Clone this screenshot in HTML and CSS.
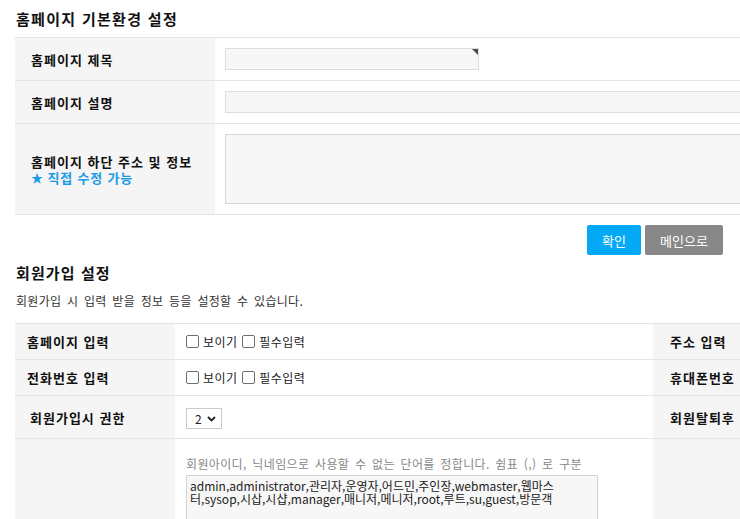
FILE: index.html
```html
<!DOCTYPE html>
<html lang="ko">
<head>
<meta charset="utf-8">
<title>홈페이지 기본환경 설정</title>
<link rel="stylesheet" href="styles.css">
</head>
<body>
<div class="page">
  <h2 class="sec-title">홈페이지 기본환경 설정</h2>
  <div class="form-table basic">
    <div class="row">
      <div class="th">홈페이지 제목</div>
      <div class="td">
        <span class="input-wrap"><input type="text" class="inp inp-short"><span class="corner"></span></span>
      </div>
    </div>
    <div class="row">
      <div class="th">홈페이지 설명</div>
      <div class="td"><input type="text" class="inp inp-long"></div>
    </div>
    <div class="row">
      <div class="th th-2line">
        <span class="line">홈페이지 하단 주소 및 정보</span>
        <span class="line note"><span class="star">★</span> 직접 수정 가능</span>
      </div>
      <div class="td"><textarea class="ta-addr"></textarea></div>
    </div>
  </div>
  <div class="btn-row">
    <button type="button" class="btn btn-ok">확인</button>
    <button type="button" class="btn btn-main">메인으로</button>
  </div>

  <h2 class="sec-title sec-title2">회원가입 설정</h2>
  <p class="sec-desc">회원가입 시 입력 받을 정보 등을 설정할 수 있습니다.</p>
  <div class="form-table member">
    <div class="row row-s">
      <div class="th th-l">홈페이지 입력</div>
      <div class="td2">
        <label class="chk"><input type="checkbox">보이기</label>
        <label class="chk"><input type="checkbox">필수입력</label>
      </div>
      <div class="th th-r">주소 입력</div>
      <div class="td2"></div>
    </div>
    <div class="row row-s">
      <div class="th th-l">전화번호 입력</div>
      <div class="td2">
        <label class="chk"><input type="checkbox">보이기</label>
        <label class="chk"><input type="checkbox">필수입력</label>
      </div>
      <div class="th th-r">휴대폰번호</div>
      <div class="td2"></div>
    </div>
    <div class="row row-m">
      <div class="th th-l th-l2">회원가입시 권한</div>
      <div class="td2">
        <span class="sel-wrap">
          <select class="sel"><option>2</option></select>
          <svg class="chev" width="9" height="6" viewBox="0 0 9 6"><path d="M1 1 L4.5 4.5 L8 1" fill="none" stroke="#222" stroke-width="1.8"/></svg>
        </span>
      </div>
      <div class="th th-r">회원탈퇴후</div>
      <div class="td2"></div>
    </div>
    <div class="row row-l">
      <div class="th th-l"></div>
      <div class="td4">
        <p class="hint">회원아이디, 닉네임으로 사용할 수 없는 단어를 정합니다. 쉼표 (,) 로 구분</p>
        <textarea class="ta-words">admin,administrator,관리자,운영자,어드민,주인장,webmaster,웹마스&#10;터,sysop,시삽,시샵,manager,매니저,메니저,root,루트,su,guest,방문객</textarea>
      </div>
      <div class="th th-r"></div>
      <div class="td2"></div>
    </div>
  </div>
</div>
</body>
</html>
```

FILE: styles.css
```css
* { box-sizing: border-box; }
html, body { margin: 0; padding: 0; overflow: hidden; background: #fff; }
body {
  font-family: "Noto Sans CJK KR", "Noto Sans", sans-serif;
  color: #222;
  font-size: 12px;
}
.page { width: 1300px; padding-left: 15px; }

.sec-title {
  margin: 0;
  padding-left: 1px;
  font-size: 15px;
  font-weight: 700;
  letter-spacing: 1.3px;
  height: 37px;
  line-height: 37px;
  color: #111;
}
.sec-title2 { height: 36px; line-height: 36px; letter-spacing: 1.1px; }
.sec-desc {
  margin: 0 0 12px 1px;
  line-height: 20px;
  font-size: 12px;
  letter-spacing: 0.3px;
  word-spacing: 2px;
  color: #333;
}

.form-table { border-top: 1px solid #e5e5e5; width: 1200px; }
.row { display: grid; border-bottom: 1px solid #e5e5e5; }
.basic .row { grid-template-columns: 200px 1fr; }
.member .row { grid-template-columns: 160px 478px 160px 1fr; }

.th {
  background: #f5f5f5;
  font-size: 13px;
  font-weight: 700;
  letter-spacing: 1px;
  color: #111;
  display: flex;
  flex-direction: column;
  justify-content: center;
  padding-left: 16px;
  line-height: 15px;
}
.th-2line { gap: 1px; padding-top: 1px; }
.th-2line .line { display: block; line-height: 15px; }
.th-l { padding-left: 12px; }
.th-l2 { padding-left: 15px; }
.th-r { padding-left: 17px; }

.td { padding: 10px; }
.inp {
  display: block;
  height: 22px;
  border: 1px solid #ddd;
  background: #f7f7f7;
  margin: 0;
}
.inp-short { width: 254px; }
.inp-long { width: 100%; }
.input-wrap { position: relative; display: inline-block; vertical-align: top; }
.corner {
  position: absolute;
  top: 1px;
  right: 1px;
  width: 0;
  height: 0;
  border-top: 6px solid #4b5044;
  border-left: 6px solid transparent;
}
.ta-addr {
  display: block;
  width: 100%;
  height: 70px;
  margin: 0;
  border: 1px solid #d3d7db;
  background: #f7f7f7;
  resize: none;
}
.note { color: #1b9ce8; letter-spacing: 0.8px; }
.star { font-size: 12px; letter-spacing: 0; }

.btn-row {
  width: 708px;
  display: flex;
  justify-content: flex-end;
  gap: 4px;
  padding-top: 10px;
}
.btn {
  height: 30px;
  border: 0;
  border-radius: 2px;
  color: #fff;
  font-family: inherit;
  font-size: 13px;
  padding: 0;
}
.btn-ok { width: 54px; background: #03a9f4; }
.btn-main { width: 78px; background: #888; }

.row-s { height: 36px; }
.row-m { height: 43px; }
.row-l { height: 120px; }

.td2 {
  display: flex;
  align-items: center;
  padding: 0 11px;
}
.chk {
  display: inline-flex;
  align-items: center;
  font-size: 12px;
  letter-spacing: 0.4px;
  color: #222;
  margin-right: 5px;
}
.chk input {
  appearance: none;
  -webkit-appearance: none;
  width: 13px;
  height: 13px;
  margin: 0 4px 0 0;
  border: 1px solid #6d6d6d;
  border-radius: 2px;
  background: #fff;
}

.sel-wrap { position: relative; display: inline-block; margin-top: 2px; }
.sel {
  appearance: none;
  -webkit-appearance: none;
  display: block;
  width: 36px;
  height: 21px;
  margin: 0;
  padding: 0 0 0 8px;
  border: 1px solid #ccc;
  border-radius: 0;
  background: #fff;
  font-family: inherit;
  font-size: 12px;
  color: #222;
}
.chev { position: absolute; top: 8px; right: 6px; }

.td4 { padding: 15px 11px 0; }
.hint {
  margin: 0;
  line-height: 20px;
  color: #888;
  font-size: 12px;
  letter-spacing: 0.35px;
  word-spacing: 2px;
}
.ta-words {
  display: block;
  width: 412px;
  height: 100px;
  margin: 1px 0 0;
  padding: 3px;
  border: 1px solid #cdd5db;
  background: #f7f7f7;
  resize: none;
  font-family: inherit;
  font-size: 12px;
  line-height: 13px;
  color: #222;
  white-space: pre;
  overflow: hidden;
}
```
